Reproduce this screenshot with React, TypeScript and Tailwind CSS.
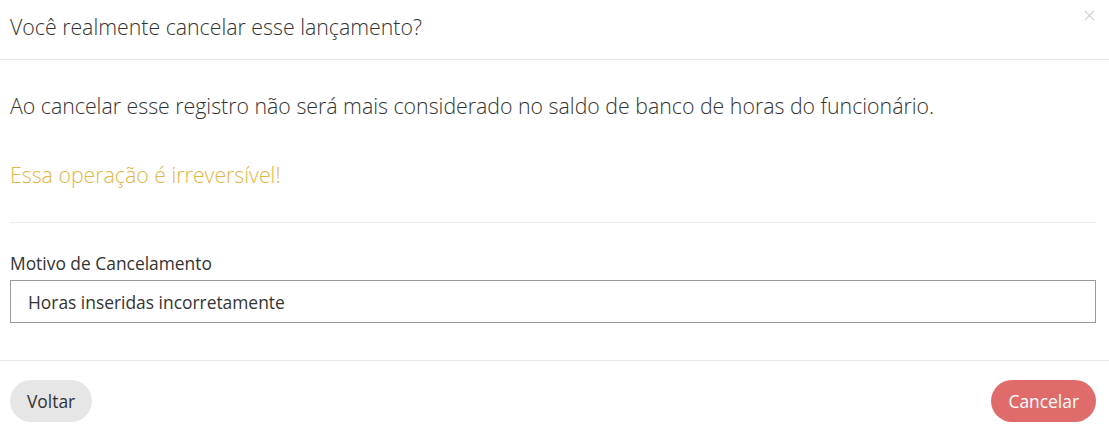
import { useState } from 'react';

export default function App() {
  const [motivo, setMotivo] = useState('Horas inseridas incorretamente');

  return (
    <div className="h-[438px] w-[1109px] bg-white font-['Open_Sans',sans-serif] text-[#333]">
      <div className="relative flex h-[60px] items-center border-b border-[#e5e5e5] px-[10px] pb-[6px]">
        <h4 className="text-[21.3px] font-light leading-none">Você realmente cancelar esse lançamento?</h4>
        <button
          type="button"
          className="absolute right-[13px] top-[9px] flex h-[13px] w-[13px] items-center justify-center"
        >
          <svg viewBox="0 0 12 12" className="h-[11px] w-[11px]" stroke="#d0d0d0" strokeWidth="1.4">
            <path d="M1 1L11 11M11 1L1 11" />
          </svg>
        </button>
      </div>

      <div className="pl-[10px] pr-[13px]">
        <p className="mt-[34px] text-[21.3px] font-light leading-[24px] text-[#333]">
          Ao cancelar esse registro não será mais considerado no saldo de banco de horas do funcionário.
        </p>
        <p className="mt-[45px] text-[21.3px] font-light leading-[24px] text-[#e5b543]">
          Essa operação é irreversível!
        </p>
        <div className="mt-[35px] border-t border-[#ececec]" />

        <label className="mt-[29px] block text-[17.4px] leading-[22px] text-[#333]">Motivo de Cancelamento</label>
        <input
          value={motivo}
          onChange={(e) => setMotivo(e.target.value)}
          className="mt-[6px] block h-[43px] w-full border border-[#999] px-[17px] text-[17.4px] text-[#333] outline-none"
        />
      </div>

      <div className="mt-[37px] flex items-center justify-between border-t border-[#e5e5e5] pl-[10px] pr-[13px] pt-[19px]">
        <button
          type="button"
          className="h-[42px] rounded-full bg-[#e6e6e6] px-[17px] text-[17.4px] text-[#333]"
        >
          Voltar
        </button>
        <button
          type="button"
          className="h-[42px] rounded-full bg-[#e06b6b] px-[17px] text-[17.4px] text-white"
        >
          Cancelar
        </button>
      </div>
    </div>
  );
}
